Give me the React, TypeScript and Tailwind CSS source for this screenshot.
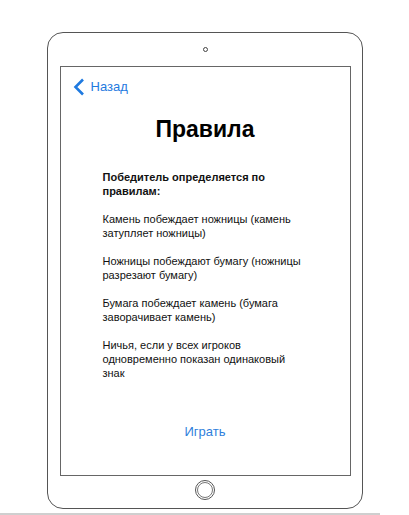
import React from 'react';

const rules = [
  'Камень побеждает ножницы (камень затупляет ножницы)',
  'Ножницы побеждают бумагу (ножницы разрезают бумагу)',
  'Бумага побеждает камень (бумага заворачивает камень)',
  'Ничья, если у всех игроков одновременно показан одинаковый знак',
];

const App: React.FC = () => {
  return (
    <div className="w-[409px] h-[515px] bg-white relative overflow-hidden" style={{ fontFamily: '"Liberation Sans", Arial, sans-serif' }}>
      <div className="pt-[32px] pl-[47px]">
        {/* tablet frame */}
        <div className="w-[316px] h-[477px] border-[1.5px] border-[#555] rounded-[16px] flex flex-col items-center">
          <div className="mt-[14px] w-[5px] h-[5px] rounded-full border border-[#444]" />
          <div className="mt-[14px] w-[291px] h-[410px] border-[1.5px] border-[#666] flex flex-col">
            <div className="flex items-center pl-[12px] pt-[10px]">
              <svg width="12" height="18" viewBox="0 0 12 18" className="mr-[6px]">
                <path d="M10 1.5 L2.5 9 L10 16.5" fill="none" stroke="#1f7ae0" strokeWidth="2.6" />
              </svg>
              <span className="text-[13px] text-[#1f7ae0]">Назад</span>
            </div>
            <h1 className="mt-[21px] text-center text-[23px] font-bold text-black leading-none">Правила</h1>
            <div className="mt-[29px] ml-[42px] w-[206px] text-[11px] leading-[14px] text-[#111]">
              <p className="font-bold">Победитель определяется по правилам:</p>
              {rules.map((r) => (
                <p key={r} className="mt-[14px]">{r}</p>
              ))}
            </div>
            <div className="mt-auto mb-[34px] text-center text-[13px] text-[#2f7fdc]">Играть</div>
          </div>
          <div className="mt-[4px] w-[20px] h-[20px] rounded-full border border-[#555] flex items-center justify-center">
            <div className="w-[16px] h-[16px] rounded-full border border-[#777]" />
          </div>
        </div>
      </div>
      <div className="absolute left-0 bottom-0 w-[380px] h-[2px] bg-[#cfcfcf]" />
    </div>
  );
};

export default App;
